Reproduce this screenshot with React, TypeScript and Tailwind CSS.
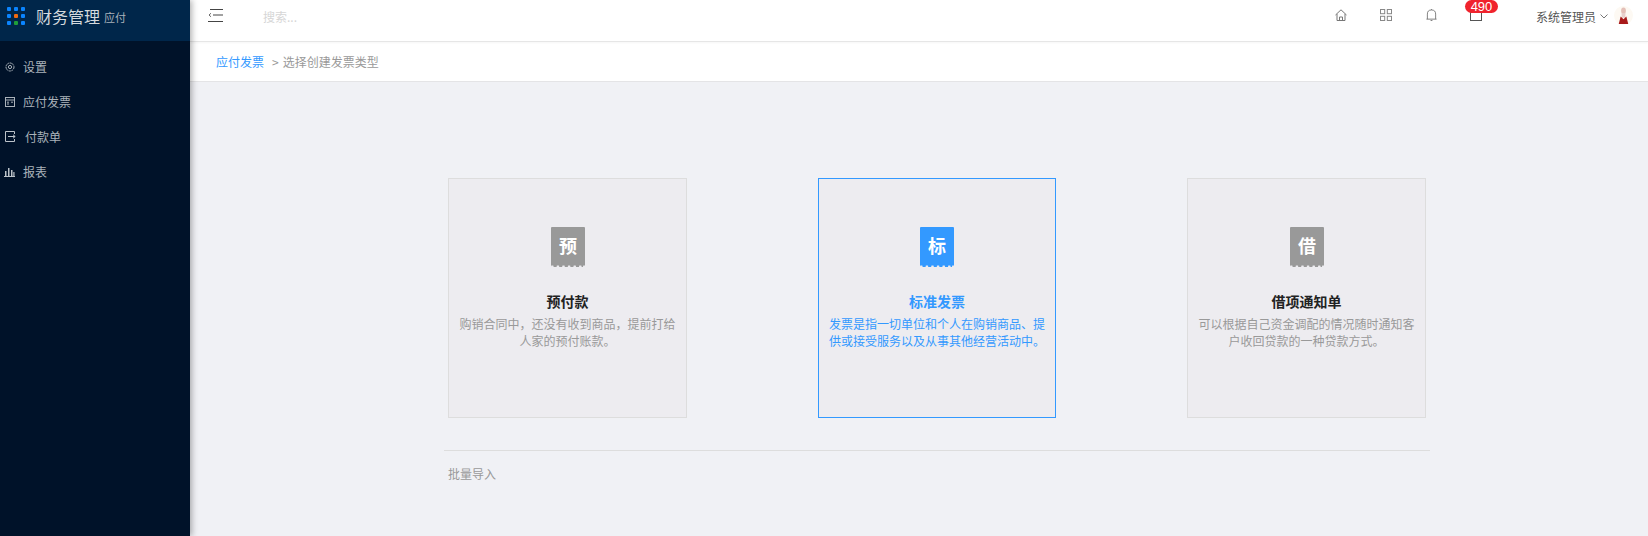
import React from "react";

const font = { fontFamily: '"Noto Sans CJK SC", "Liberation Sans", sans-serif' };

function Ticket({ ch, color }: { ch: string; color: string }) {
  return (
    <svg width="34" height="40" viewBox="0 0 34 40" className="block">
      <path d="M1 0H33a1 1 0 0 1 1 1V40H0V1a1 1 0 0 1 1-1z" fill={color} />
      {[1, 6.6, 12.2, 17.8, 23.4, 29, 33].map((x) => (
        <rect key={x} x={x - 1} y="38.6" width="2.6" height="1.4" rx="0.6" fill="#edecf0" />
      ))}
      <text x="17" y="26" textAnchor="middle" fontSize="18" fontWeight="700" fill="#fff" style={font}>
        {ch}
      </text>
    </svg>
  );
}

function Card({ ch, title, desc, active }: { ch: string; title: string; desc: string; active?: boolean }) {
  return (
    <div
      className={`h-[240px] border bg-[#edecf0] flex flex-col items-center pt-[48px] px-[10px] text-center ${
        active ? "w-[238px] border-[#3399ff]" : "w-[239px] border-[#dddddd]"
      }`}
    >
      <Ticket ch={ch} color={active ? "#3399ff" : "#999999"} />
      <div className={`mt-[24px] text-[14px] leading-[20px] font-bold ${active ? "text-[#3399ff]" : "text-[#222222]"}`}>{title}</div>
      <div className={`mt-[4px] text-[12px] leading-[17px] ${active ? "text-[#3399ff]" : "text-[#999999]"}`}>{desc}</div>
    </div>
  );
}

export default function App() {
  return (
    <div className="flex h-[536px] w-[1648px] overflow-hidden bg-[#f0f1f5]" style={font}>
      <aside className="relative z-10 w-[190px] shrink-0 bg-[#001229] shadow-[2px_0_6px_rgba(0,0,0,0.3)]">
        <div className="h-[41px] bg-[#00264a] flex items-center pl-[7px] pb-[10px]">
          <svg width="18" height="18" viewBox="0 0 18 18" className="shrink-0">
            {[0, 1, 2].map((r) =>
              [0, 1, 2].map((c) => (
                <rect
                  key={`${r}${c}`}
                  x={c * 7}
                  y={r * 7}
                  width="4"
                  height="4"
                  rx="1"
                  fill={r === 1 && c === 1 ? "#f06a10" : r === 2 && c === 1 ? "#1f9e3a" : "#0a84ff"}
                />
              ))
            )}
          </svg>
          <span className="ml-[11px] text-[16px] text-[#d5dade]">财务管理</span>
          <span className="ml-[4px] mt-[3px] text-[11px] text-[#a9b2bb]">应付</span>
        </div>
        <nav className="pt-[8px] text-[12px] text-[#aab2ba]">
          <div className="h-[35px] flex items-center pl-[5px] gap-[8px]">
            <svg width="10" height="10" viewBox="0 0 10 10" fill="none" stroke="#aab2ba" strokeWidth="1"><circle cx="5" cy="5" r="4" strokeDasharray="2 0.6" /><circle cx="5" cy="5" r="1.6" /></svg>
            <span>设置</span>
          </div>
          <div className="h-[35px] flex items-center pl-[5px] gap-[8px]">
            <svg width="10" height="10" viewBox="0 0 10 10" fill="none" stroke="#aab2ba" strokeWidth="1"><rect x="0.5" y="0.5" width="9" height="9" /><path d="M0.5 3H9.5M2 5.2H4M2 7H4M6 5.2H8" /></svg>
            <span>应付发票</span>
          </div>
          <div className="h-[35px] flex items-center pl-[5px] gap-[9px]">
            <svg width="11" height="11" viewBox="0 0 11 11" fill="none" stroke="#bcc3ca" strokeWidth="1"><path d="M9.5 3V0.5H0.5V10.5H9.5V8" /><path d="M3 5.5H10M8 3.8L10.2 5.5L8 7.2" /></svg>
            <span>付款单</span>
          </div>
          <div className="h-[35px] flex items-center pl-[4px] gap-[8px]">
            <svg width="11" height="10" viewBox="0 0 11 10" fill="#bcc3ca"><rect x="0" y="9" width="11" height="1" /><rect x="1" y="4" width="1.5" height="5" /><rect x="4" y="1" width="1.5" height="8" /><rect x="7" y="3" width="1.5" height="6" /><rect x="9.3" y="5" width="1.2" height="4" /></svg>
            <span>报表</span>
          </div>
        </nav>
      </aside>

      <main className="flex-1 min-w-0 flex flex-col">
        <header className="h-[42px] shrink-0 bg-white border-b border-[#e6e6e6] flex items-center pb-[11px] relative z-[1] shadow-[0_1px_2px_rgba(0,0,0,0.04)]">
          <svg width="15" height="13" viewBox="0 0 15 13" className="ml-[18px]" fill="none" stroke="#444" strokeWidth="1">
            <path d="M2 0.5H15M5 6H15M0 12.5H15" />
            <path d="M3 4.2L1 6L3 7.8" strokeWidth="0.8" />
          </svg>
          <span className="ml-[40px] mt-[4px] text-[12px] text-[#d6d6d6]">搜索...</span>
          <div className="ml-auto flex items-center">
            <svg width="12" height="12" viewBox="0 0 12 12" fill="none" stroke="#777" strokeWidth="1"><path d="M0.5 6L6 0.8L11.5 6M2 5V11.5H10V5M4.5 11.5V8H7.5V11.5" /></svg>
            <svg width="12" height="12" viewBox="0 0 12 12" fill="none" stroke="#888" strokeWidth="1" className="ml-[33px]"><rect x="0.5" y="0.5" width="4.2" height="4.2" /><rect x="7.3" y="0.5" width="4.2" height="4.2" /><rect x="0.5" y="7.3" width="4.2" height="4.2" /><rect x="7.3" y="7.3" width="4.2" height="4.2" /></svg>
            <svg width="11" height="14" viewBox="0 0 12 14" fill="none" stroke="#777" strokeWidth="1" className="ml-[34px]"><path d="M1.5 11.5V6a4.5 4.5 0 0 1 9 0V11.5M0.5 11.5H11.5M5 13H7M6 1.5V0.5" /></svg>
            <div className="relative ml-[33px]">
              <svg width="12" height="12" viewBox="0 0 12 12" fill="none" stroke="#555" strokeWidth="1" className="block"><rect x="0.5" y="0.5" width="11" height="11" /><path d="M5.5 3.5H6.5" /></svg>
              <span className="absolute left-[-5px] top-[-9px] h-[13px] w-[33px] rounded-full bg-[#f0232d] text-white text-[13px] leading-[13px] text-center" style={{ fontFamily: '"Liberation Sans", sans-serif' }}>490</span>
            </div>
            <span className="ml-[54px] mt-[4px] text-[12px] text-[#555555]">系统管理员</span>
            <svg width="8" height="5" viewBox="0 0 8 5" fill="none" stroke="#777" strokeWidth="1" className="ml-[4px] mt-[2px]"><path d="M0.5 0.5L4 4L7.5 0.5" /></svg>
            <svg width="19" height="19" viewBox="0 0 20 20" className="ml-[6px] mr-[15px]">
              <circle cx="10" cy="10" r="10" fill="#fdf9f3" />
              <ellipse cx="10" cy="5" rx="2.5" ry="3.5" fill="#e4c0b8" />
              <rect x="8" y="7.5" width="4" height="5" fill="#e8d0cc" />
              <path d="M5 19L7 11L10 14L13 11L15 19Z" fill="#a81a1a" />
            </svg>
          </div>
        </header>

        <div className="h-[40px] shrink-0 bg-white border-b border-[#e4e4e6] flex items-center pl-[26px] text-[12px]">
          <span className="text-[#3399ff]">应付发票</span>
          <span className="ml-[8px] text-[#999999]">&gt;</span>
          <span className="ml-[4px] text-[#999999]">选择创建发票类型</span>
        </div>

        <div className="ml-[254px] w-[986px] pt-[96px]">
          <div className="flex justify-between px-[4px]">
            <Card ch="预" title="预付款" desc="购销合同中，还没有收到商品，提前打给人家的预付账款。" />
            <Card ch="标" title="标准发票" desc="发票是指一切单位和个人在购销商品、提供或接受服务以及从事其他经营活动中。" active />
            <Card ch="借" title="借项通知单" desc="可以根据自己资金调配的情况随时通知客户收回贷款的一种贷款方式。" />
          </div>
          <div className="mt-[32px] border-t border-[#dddddd] pt-[14px] pl-[4px] text-[12px] leading-[17px] text-[#999999]">批量导入</div>
        </div>
      </main>
    </div>
  );
}
